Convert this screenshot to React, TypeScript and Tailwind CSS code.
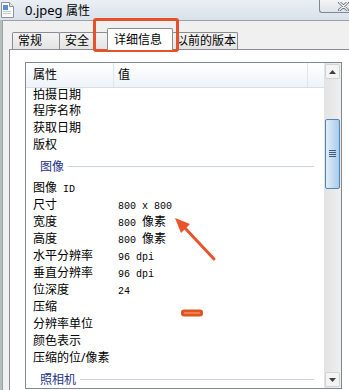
import type { ReactNode } from "react";

type Entry =
  | { type: "row"; label: ReactNode; value?: ReactNode }
  | { type: "group"; title: string };

function Mono({ children }: { children: ReactNode }) {
  return <span className="font-['Liberation_Mono',monospace] text-[10px]">{children}</span>;
}

const ENTRIES: Entry[] = [
  { type: "row", label: "拍摄日期" },
  { type: "row", label: "程序名称" },
  { type: "row", label: "获取日期" },
  { type: "row", label: "版权" },
  { type: "group", title: "图像" },
  { type: "row", label: <>图像<Mono> ID</Mono></> },
  { type: "row", label: "尺寸", value: <Mono>800 x 800</Mono> },
  { type: "row", label: "宽度", value: <><Mono>800 </Mono>像素</> },
  { type: "row", label: "高度", value: <><Mono>800 </Mono>像素</> },
  { type: "row", label: "水平分辨率", value: <Mono>96 dpi</Mono> },
  { type: "row", label: "垂直分辨率", value: <Mono>96 dpi</Mono> },
  { type: "row", label: "位深度", value: <Mono>24</Mono> },
  { type: "row", label: "压缩" },
  { type: "row", label: "分辨率单位" },
  { type: "row", label: "颜色表示" },
  { type: "row", label: "压缩的位/像素" },
  { type: "group", title: "照相机" },
];

function FileIcon() {
  return (
    <svg width="13" height="16" viewBox="0 0 13 16">
      <path d="M0.5 0.5 H8.5 L12.5 4.5 V15.5 H0.5 Z" fill="#fbfbfb" stroke="#8c939b" />
      <path d="M8.5 0.5 V4.5 H12.5" fill="#e4e7ea" stroke="#8c939b" />
      <rect x="2" y="3" width="5" height="5" fill="#5d8fd0" />
      <rect x="2" y="9" width="8" height="1" fill="#c4ccd4" />
      <rect x="2" y="11" width="8" height="1" fill="#c4ccd4" />
    </svg>
  );
}

function CloseGlyph() {
  return (
    <svg width="11" height="9" viewBox="0 0 11 9">
      <path d="M1.5 0.5 L9.5 8 M9.5 0.5 L1.5 8" stroke="#6b737c" strokeWidth="3" strokeLinecap="round" />
      <path d="M1.5 0.5 L9.5 8 M9.5 0.5 L1.5 8" stroke="#f4f6f8" strokeWidth="1.2" strokeLinecap="round" />
    </svg>
  );
}

function ArrowButton({ up }: { up: boolean }) {
  return (
    <div className="mx-px my-px flex h-[15px] shrink-0 items-center justify-center rounded-[2px] border border-[#d3d3d3] bg-[#f4f4f4]">
      <svg width="7" height="4" viewBox="0 0 7 4">
        <path d={up ? "M0 4 L3.5 0 L7 4 Z" : "M0 0 L3.5 4 L7 0 Z"} fill="#404040" />
      </svg>
    </div>
  );
}

function ScrollBar() {
  return (
    <div className="flex w-[17px] shrink-0 flex-col bg-gradient-to-r from-[#e3e3e3] to-[#efefef]">
      <ArrowButton up />
      <div className="h-[39px] shrink-0" />
      <div className="mx-px flex h-[70px] shrink-0 items-center justify-center rounded-[2px] border border-[#4f86b5] bg-gradient-to-r from-[#e2eef8] to-[#a9cbe8]">
        <svg width="7" height="8" viewBox="0 0 7 8">
          <path d="M0 0.5 H7 M0 2.5 H7 M0 4.5 H7 M0 6.5 H7" stroke="#3f5f7c" strokeWidth="1" />
        </svg>
      </div>
      <div className="flex-1" />
      <ArrowButton up={false} />
    </div>
  );
}

function GroupHeader({ title }: { title: string }) {
  return (
    <div className="flex h-[26px] shrink-0 items-center pl-[14px] pr-[10px]">
      <span className="text-[12px] text-[#1e3287]">{title}</span>
      <div className="ml-[4px] h-px flex-1 bg-[#c9d5e2]" />
    </div>
  );
}

function PropertyList() {
  return (
    <div className="flex h-[327px] w-[317px] border border-[#828790] bg-white">
      <div className="flex min-w-0 flex-1 flex-col overflow-hidden">
        <div className="flex h-[25px] shrink-0 border-b border-[#d5dfe8] bg-gradient-to-b from-white to-[#eef3f9] text-[12px] leading-[24px] text-black">
          <div className="w-[88px] border-r border-[#dfe6ee] pl-[7px]">属性</div>
          <div className="w-[194px] border-r border-[#dfe6ee] pl-[4px]">值</div>
        </div>
        <div className="flex flex-1 flex-col overflow-hidden text-[12px] leading-[17px] text-black">
          {ENTRIES.map((entry, i) =>
            entry.type === "group" ? (
              <GroupHeader key={i} title={entry.title} />
            ) : (
              <div
                key={i}
                className={`flex shrink-0 whitespace-nowrap ${i === 0 ? "h-[14px] leading-[13px]" : "h-[17px]"}`}
              >
                <div className="w-[92px] pl-[7px]">{entry.label}</div>
                <div>{entry.value}</div>
              </div>
            ),
          )}
        </div>
      </div>
      <ScrollBar />
    </div>
  );
}

function Tab({ label, width, pad, selected }: { label: string; width: string; pad: string; selected?: boolean }) {
  if (selected) {
    return (
      <div
        className={`relative z-10 -mb-px -ml-px flex h-[22px] items-center rounded-t-[2px] border border-b-0 border-[#898c95] bg-white ${width} ${pad}`}
      >
        {label}
      </div>
    );
  }
  return (
    <div
      className={`-ml-px flex h-[17px] items-center rounded-t-[2px] border border-b-0 border-[#898c95] bg-gradient-to-b from-[#f3f3f3] to-[#e4e4e4] first:ml-0 ${width} ${pad}`}
    >
      {label}
    </div>
  );
}

export default function App() {
  return (
    <div className="relative flex h-[390px] w-[349px] flex-col overflow-hidden bg-[#f0f0f0] font-['Noto_Sans','Noto_Sans_CJK_SC',sans-serif] text-black">
      {/* title bar */}
      <div className="flex h-[20px] shrink-0 items-center bg-gradient-to-b from-[#eaeff4] to-[#dae1e8] pl-[1px]">
        <FileIcon />
        <span className="ml-[11px] text-[13px] leading-none">
          0.jpeg <span className="text-[12px]">属性</span>
        </span>
        <div className="-mr-[17px] ml-auto flex h-[13px] w-[47px] shrink-0 items-center justify-center self-start rounded-bl-[3px] border-b border-l border-[#7d8995] bg-gradient-to-b from-[#f2f4f6] to-[#dfe4e9]">
          <CloseGlyph />
        </div>
      </div>

      <div className="flex min-h-0 flex-1">
        <div className="w-[2px] shrink-0 bg-[#b4bdb6]" />
        <div className="flex min-w-0 flex-1 flex-col border-l border-t border-[#98a2ac]">
          {/* tabs */}
          <div className="flex h-[28px] shrink-0 items-end pl-[9px] text-[12px]">
            <Tab label="常规" width="w-[48px]" pad="pl-[5px]" />
            <Tab label="安全" width="w-[49px]" pad="pl-[5px]" />
            <Tab label="详细信息" width="w-[66px]" pad="pl-[6px]" selected />
            <Tab label="以前的版本" width="w-[66px]" pad="pl-[3px]" />
          </div>
          {/* tab page */}
          <div className="ml-[6px] flex-1 border-l border-t border-[#898c95] bg-white pl-[15px] pt-[12px]">
            <PropertyList />
          </div>
        </div>
      </div>

      {/* annotations */}
      <div className="pointer-events-none absolute left-[93px] top-[18px] h-[34px] w-[86px] rounded-[3px] border-[3px] border-[#e4512a]" />
      <svg className="pointer-events-none absolute left-0 top-0" width="349" height="390">
        <line x1="214" y1="259" x2="184" y2="227" stroke="#e8532b" strokeWidth="3" strokeLinecap="round" />
        <polygon points="175,218 190,224 181,233" fill="#e8532b" />
        <rect x="181" y="309.5" width="22" height="7" rx="3" fill="#e2541d" />
        <line x1="184" y1="313" x2="200" y2="313" stroke="#f6b08f" strokeWidth="1" />
      </svg>
    </div>
  );
}
